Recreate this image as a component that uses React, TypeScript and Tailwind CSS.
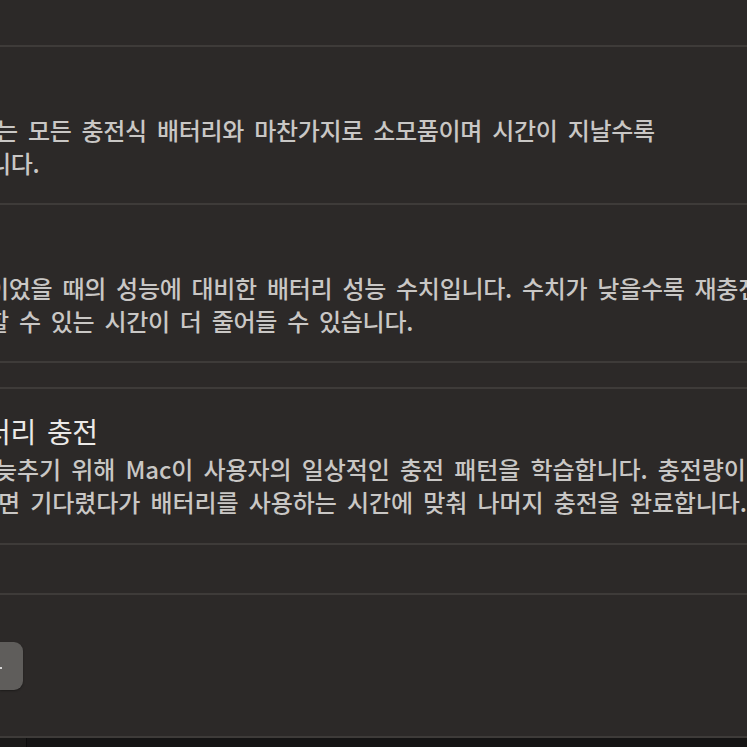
import React from "react";

const font = { fontFamily: '"Noto Sans CJK KR", "Noto Sans", sans-serif' };

function Divider() {
  return <div className="h-[2px] w-full bg-[#3e3b39]" />;
}

function Line({ text, shift }: { text: string; shift: string }) {
  return (
    <div className={`whitespace-nowrap leading-[33px] ${shift}`}>{text}</div>
  );
}

export default function App() {
  return (
    <div
      className="flex h-[747px] w-[747px] flex-col overflow-hidden bg-[#2c2928] text-[24px] font-medium tracking-[-0.3px] text-[#c9c7c5] [word-spacing:5px]"
      style={font}
    >
      <div className="h-[45px] shrink-0" />
      <Divider />

      {/* 배터리 상태 */}
      <section className="h-[156px] shrink-0 pt-[66px]">
        <Line
          shift="-ml-[4px]"
          text="는 모든 충전식 배터리와 마찬가지로 소모품이며 시간이 지날수록"
        />
        <Line shift="-ml-[11px]" text="니다." />
      </section>
      <Divider />

      {/* 최대 용량 */}
      <section className="h-[156px] shrink-0 pt-[66px]">
        <Line
          shift="-ml-[13px]"
          text="이었을 때의 성능에 대비한 배터리 성능 수치입니다. 수치가 낮을수록 재충전"
        />
        <Line
          shift="-ml-[13px]"
          text="할 수 있는 시간이 더 줄어들 수 있습니다."
        />
      </section>
      <Divider />

      <div className="h-[24px] shrink-0" />
      <Divider />

      {/* 최적화된 배터리 충전 */}
      <section className="h-[154px] shrink-0 pt-[25px]">
        <div className="-ml-[15px] whitespace-nowrap text-[28px] font-normal leading-[35px] text-[#ebe9e7]">
          터리 충전
        </div>
        <div className="mt-[3px] tracking-[-0.1px]">
          <Line
            shift="-ml-[5px]"
            text="늦추기 위해 Mac이 사용자의 일상적인 충전 패턴을 학습합니다. 충전량이"
          />
          <Line
            shift="-ml-[2px]"
            text="면 기다렸다가 배터리를 사용하는 시간에 맞춰 나머지 충전을 완료합니다."
          />
        </div>
      </section>
      <Divider />

      <div className="h-[48px] shrink-0" />
      <Divider />

      <section className="h-[141px] shrink-0 pt-[47px]">
        <div className="flex h-[48px] w-[23px] items-center rounded-r-[9px] bg-[#5f5d5b] shadow-[0_1px_2px_rgba(0,0,0,0.35)]">
          <span className="mt-[4px] h-[2px] w-[2px] rounded-full bg-white" />
        </div>
      </section>
      <Divider />

      <div className="flex flex-1">
        <div className="w-[26px] bg-[#1b1a19]" />
        <div className="w-[1px] bg-[#0c0c0c]" />
        <div className="flex-1 bg-[#151414]" />
      </div>
    </div>
  );
}
